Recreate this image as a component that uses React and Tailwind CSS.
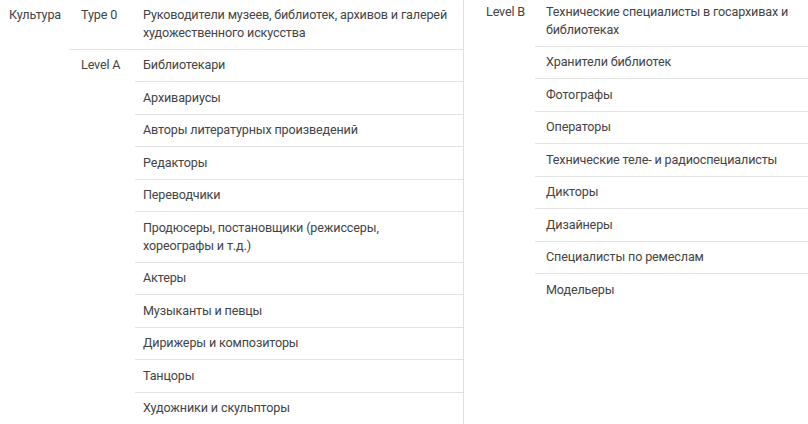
import React from "react";

// Occupations grouped by level
const leftGroups = [
  {
    label: "Type 0",
    items: ["Руководители музеев, библиотек, архивов и галерей художественного искусства"],
  },
  {
    label: "Level A",
    items: [
      "Библиотекари",
      "Архивариусы",
      "Авторы литературных произведений",
      "Редакторы",
      "Переводчики",
      "Продюсеры, постановщики (режиссеры, хореографы и т.д.)",
      "Актеры",
      "Музыканты и певцы",
      "Дирижеры и композиторы",
      "Танцоры",
      "Художники и скульпторы",
    ],
  },
];

const rightItems = [
  "Технические специалисты в госархивах и библиотеках",
  "Хранители библиотек",
  "Фотографы",
  "Операторы",
  "Технические теле- и радиоспециалисты",
  "Дикторы",
  "Дизайнеры",
  "Специалисты по ремеслам",
  "Модельеры",
];

function Row({ text, last, className = "" }) {
  return (
    <div
      className={`py-[6.75px] leading-[18px] ${last ? "" : "border-b border-[#e3e3e3]"} ${className}`}
    >
      {text}
    </div>
  );
}

export default function App() {
  return (
    <div
      className="h-screen overflow-hidden bg-white flex text-[12.6px] tracking-[-0.15px] text-[#444]"
      style={{ fontFamily: "Roboto, 'Noto Sans', sans-serif" }}
    >
      {/* Left half */}
      <div className="w-[464px] shrink-0 border-r border-[#e0e0e0] flex">
        <div className="w-[70px] shrink-0 pl-[9px] pt-[6px] leading-[18px]">Культура</div>
        <div className="flex-1 -mt-[1px]">
          {leftGroups.map((group, gi) => (
            <div
              key={group.label}
              className={`flex ${gi === 0 ? "border-b border-[#e3e3e3]" : ""}`}
            >
              <div className="w-[65px] shrink-0 pl-[11px] py-[6.75px] leading-[18px]">
                {group.label}
              </div>
              <div className="flex-1">
                {group.items.map((item, i) => (
                  <Row
                    key={item}
                    text={item}
                    last={gi === 0 || i === group.items.length - 1}
                    className="pl-[8px] pr-[14px]"
                  />
                ))}
              </div>
            </div>
          ))}
        </div>
      </div>

      {/* Right half */}
      <div className="flex-1 flex -mt-[4px]">
        <div className="w-[71px] shrink-0 pl-[22px] py-[6.75px] leading-[18px]">Level B</div>
        <div className="flex-1">
          {rightItems.map((item, i) => (
            <Row
              key={item}
              text={item}
              last={i === rightItems.length - 1}
              className="pl-[11px] pr-[11px]"
            />
          ))}
        </div>
      </div>
    </div>
  );
}
